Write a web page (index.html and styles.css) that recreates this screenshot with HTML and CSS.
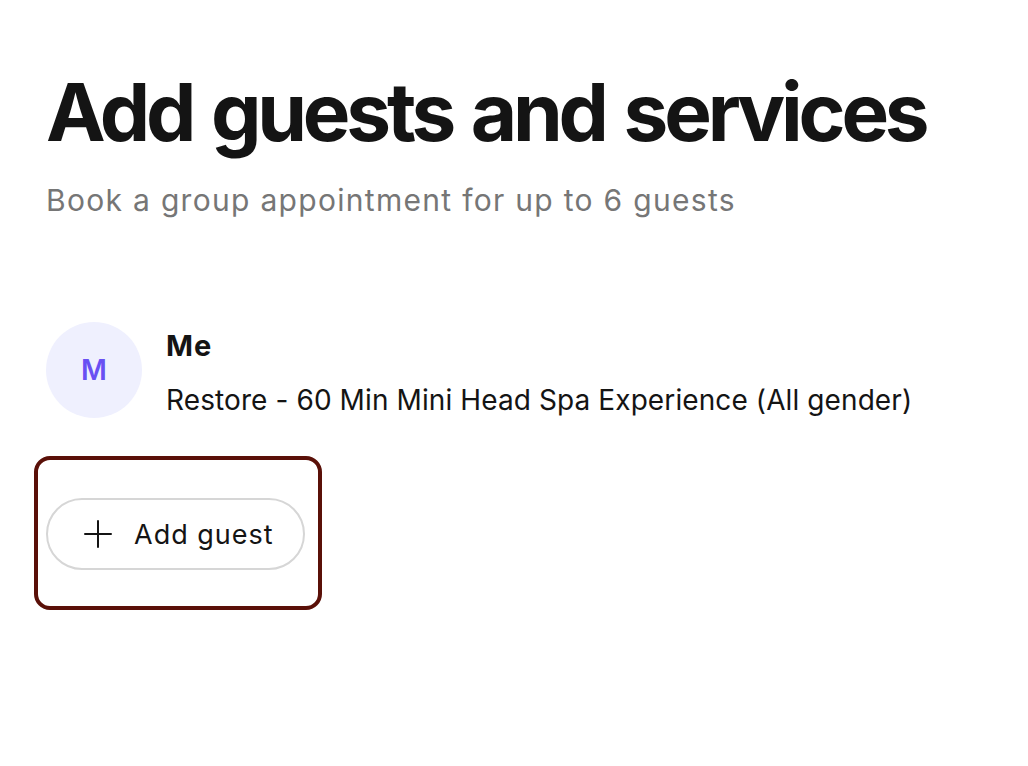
FILE: index.html
```html
<!DOCTYPE html>
<html lang="en">
<head>
<meta charset="utf-8">
<title>Add guests and services</title>
<link rel="stylesheet" href="styles.css">
</head>
<body>
<main class="page">
  <h1 class="title">Add guests and services</h1>
  <p class="subtitle">Book a group appointment for up to 6 guests</p>
  <ul class="guests">
    <li class="guest">
      <div class="avatar">M</div>
      <div class="guest-info">
        <div class="guest-name">Me</div>
        <div class="guest-service">Restore - 60 Min Mini Head Spa Experience (All gender)</div>
      </div>
    </li>
  </ul>
  <div class="add-wrap">
    <button class="add-btn" type="button">
      <svg class="plus" width="28" height="28" viewBox="0 0 28 28" aria-hidden="true"><path d="M14 1v26M1 14h26" stroke="#141414" stroke-width="2" stroke-linecap="round" fill="none"/></svg>
      <span>Add guest</span>
    </button>
  </div>
</main>
</body>
</html>
```
FILE: styles.css
```css
* { box-sizing: border-box; }
html, body { margin: 0; background: #fff; }
body { font-family: Inter, "Noto Sans", sans-serif; color: #141414; }
.page { padding: 64px 46px 0; }
.title {
  margin: 0;
  font-size: 80px;
  font-weight: 700;
  line-height: 96px;
  letter-spacing: -4.2px;
  word-spacing: 4px;
  white-space: nowrap;
}
.subtitle {
  margin: 20px 0 0;
  font-size: 30px;
  line-height: 40px;
  color: #767676;
  letter-spacing: 1.3px;
  white-space: nowrap;
}
.guests { list-style: none; margin: 102px 0 0; padding: 0; }
.guest { display: flex; align-items: flex-start; gap: 24px; }
.avatar {
  flex: none;
  width: 96px; height: 96px; border-radius: 50%;
  background: #eff0fe; color: #6950f3;
  display: flex; align-items: center; justify-content: center;
  font-size: 28px; font-weight: 600;
}
.guest-info { display: flex; flex-direction: column; gap: 18px; padding-top: 6px; }
.guest-name { font-size: 29px; font-weight: 700; line-height: 36px; letter-spacing: 1px; }
.guest-service { font-size: 28px; line-height: 36px; letter-spacing: 0.1px; white-space: nowrap; }
.add-wrap {
  display: inline-block;
  margin: 38px 0 0 -12px;
  padding: 38px 13px 36px 8px;
  border: 4px solid #5a1008;
  border-radius: 16px;
}
.add-btn {
  display: flex; align-items: center; gap: 22px;
  width: 259px; height: 72px; padding: 0 0 0 36px;
  border: 2px solid #d6d6d6; border-radius: 36px;
  background: #fff;
  font-family: inherit; font-size: 27px; color: #141414;
  letter-spacing: 1px;
}
.plus { flex: none; }
```
